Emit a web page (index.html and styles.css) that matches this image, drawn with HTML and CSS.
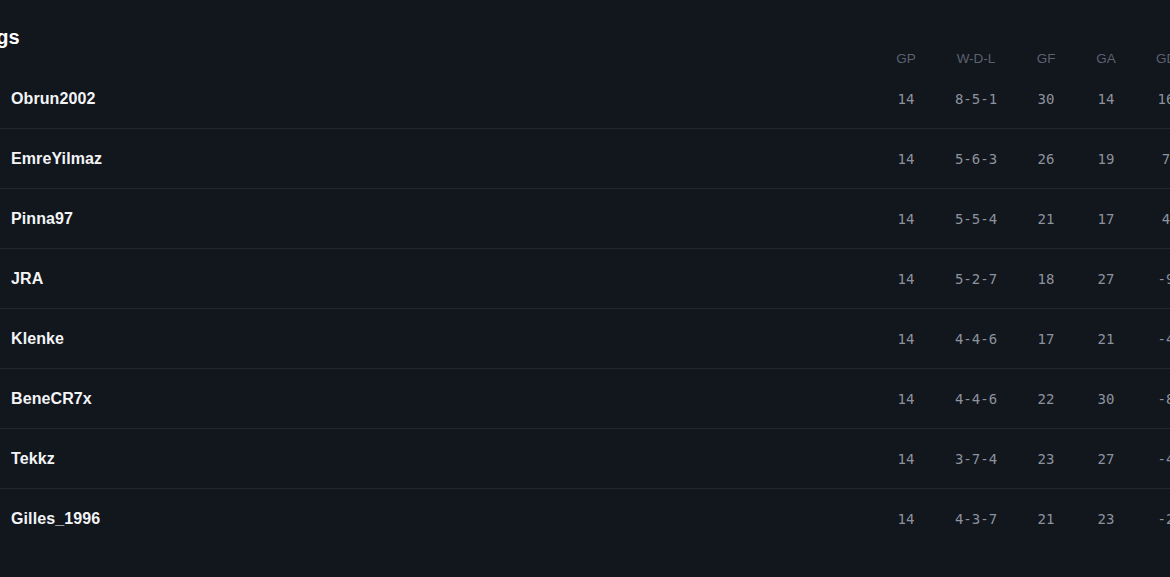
FILE: index.html
```html
<!DOCTYPE html>
<html lang="en">
<head>
<meta charset="utf-8">
<title>Standings</title>
<link rel="stylesheet" href="styles.css">
</head>
<body>
<section class="standings">
  <h2 class="title">Standings</h2>
  <div class="row head">
    <span class="name"></span>
    <span class="c">GP</span>
    <span class="c wdl">W-D-L</span>
    <span class="c">GF</span>
    <span class="c">GA</span>
    <span class="c">GD</span>
  </div>
  <div class="row"><span class="name">Obrun2002</span><span class="c n">14</span><span class="c wdl n">8-5-1</span><span class="c n">30</span><span class="c n">14</span><span class="c n">16</span></div>
  <div class="row"><span class="name">EmreYilmaz</span><span class="c n">14</span><span class="c wdl n">5-6-3</span><span class="c n">26</span><span class="c n">19</span><span class="c n">7</span></div>
  <div class="row"><span class="name">Pinna97</span><span class="c n">14</span><span class="c wdl n">5-5-4</span><span class="c n">21</span><span class="c n">17</span><span class="c n">4</span></div>
  <div class="row"><span class="name">JRA</span><span class="c n">14</span><span class="c wdl n">5-2-7</span><span class="c n">18</span><span class="c n">27</span><span class="c n">-9</span></div>
  <div class="row"><span class="name">Klenke</span><span class="c n">14</span><span class="c wdl n">4-4-6</span><span class="c n">17</span><span class="c n">21</span><span class="c n">-4</span></div>
  <div class="row"><span class="name">BeneCR7x</span><span class="c n">14</span><span class="c wdl n">4-4-6</span><span class="c n">22</span><span class="c n">30</span><span class="c n">-8</span></div>
  <div class="row"><span class="name">Tekkz</span><span class="c n">14</span><span class="c wdl n">3-7-4</span><span class="c n">23</span><span class="c n">27</span><span class="c n">-4</span></div>
  <div class="row last"><span class="name">Gilles_1996</span><span class="c n">14</span><span class="c wdl n">4-3-7</span><span class="c n">21</span><span class="c n">23</span><span class="c n">-2</span></div>
</section>
</body>
</html>
```

FILE: styles.css
```css
html, body {
  margin: 0;
  padding: 0;
  background: #12161d;
  height: 100%;
  overflow: hidden;
}
body {
  font-family: "Liberation Sans", Arial, sans-serif;
  color: #f3f4f6;
}
.standings {
  padding-top: 27px;
}
.title {
  margin: 0 0 0 -77px;
  font-size: 20px;
  line-height: 20px;
  font-weight: 700;
  color: #ffffff;
  height: 22px;
}
.row {
  display: flex;
  align-items: center;
  height: 60px;
  border-bottom: 1px solid #232830;
  box-sizing: border-box;
}
.row.last {
  border-bottom: none;
}
.row.head {
  height: 20px;
  padding-bottom: 2px;
  border-bottom: none;
  font-size: 13.5px;
  color: #5b6170;
}
.name {
  flex: 1;
  padding-left: 11px;
  font-size: 16px;
  font-weight: 700;
  color: #f3f4f6;
  letter-spacing: 0.1px;
}
.c {
  flex: 0 0 60px;
  width: 60px;
  text-align: center;
  white-space: nowrap;
}
.c.wdl {
  flex-basis: 80px;
  width: 80px;
}
.c:last-child {
  margin-right: -26px;
}
.n {
  font-family: "DejaVu Sans Mono", monospace;
  font-size: 14px;
  color: #8d939e;
}
```
